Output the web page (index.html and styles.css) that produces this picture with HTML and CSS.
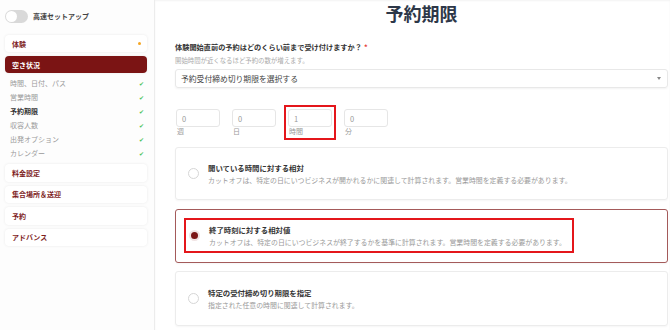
FILE: index.html
```html
<!DOCTYPE html>
<html lang="ja">
<head>
    <meta charset="UTF-8">
    <meta name="viewport" content="width=device-width, initial-scale=1.0">
    <title>予約期限</title>
    <link rel="stylesheet" href="styles.css">
</head>
<body>
    <div class="sidebar">
        <div class="quick-setup">
            <span class="toggle"><span class="knob"></span></span>
            <span>高速セットアップ</span>
        </div>

        <div class="nav-card experience">体験<span class="dot"></span></div>
        <div class="nav-card active">空き状況</div>

        <ul class="sub-list">
            <li>時間、日付、パス<span class="check">✔</span></li>
            <li>営業時間<span class="check">✔</span></li>
            <li class="current">予約期限<span class="check">✔</span></li>
            <li>収容人数<span class="check">✔</span></li>
            <li>出発オプション<span class="check">✔</span></li>
            <li>カレンダー<span class="check">✔</span></li>
        </ul>

        <div class="nav-group">
            <div class="nav-card">料金設定</div>
            <div class="nav-card">集合場所＆送迎</div>
            <div class="nav-card">予約</div>
            <div class="nav-card">アドバンス</div>
        </div>
    </div>

    <div class="main">
        <h1 class="title">予約期限</h1>

        <div class="question">体験開始直前の予約はどのくらい前まで受け付けますか？<span class="req">*</span></div>
        <div class="help">開始時間が近くなるほど予約の数が増えます。</div>

        <div class="select">
            <span>予約受付締め切り期限を選択する</span>
            <span class="caret"></span>
        </div>

        <div class="times">
            <div class="time-field">
                <div class="num">0</div>
                <div class="unit">週</div>
            </div>
            <div class="time-field">
                <div class="num">0</div>
                <div class="unit">日</div>
            </div>
            <div class="time-field marked">
                <div class="num">1</div>
                <div class="unit">時間</div>
            </div>
            <div class="time-field">
                <div class="num">0</div>
                <div class="unit">分</div>
            </div>
        </div>

        <div class="option first">
            <span class="radio"></span>
            <div>
                <div class="opt-title">開いている時間に対する相対</div>
                <div class="opt-desc">カットオフは、特定の日にいつビジネスが開かれるかに関連して計算されます。営業時間を定義する必要があります。</div>
            </div>
        </div>

        <div class="option selected">
            <div class="marked-row">
                <span class="radio on"></span>
                <div>
                    <div class="opt-title">終了時刻に対する相対値</div>
                    <div class="opt-desc">カットオフは、特定の日にいつビジネスが終了するかを基準に計算されます。営業時間を定義する必要があります。</div>
                </div>
            </div>
        </div>

        <div class="option last">
            <span class="radio"></span>
            <div>
                <div class="opt-title">特定の受付締め切り期限を指定</div>
                <div class="opt-desc">指定された任意の時間に関連して計算されます。</div>
            </div>
        </div>
    </div>
</body>
</html>
```

FILE: styles.css
```css
body {
    margin: 0;
    height: 330px;
    overflow: hidden;
    display: flex;
    background-color: #fff;
    font-family: "Noto Sans CJK JP", "Noto Sans", sans-serif;
    color: #333;
}

/* sidebar */

.sidebar {
    width: 142px;
    padding: 9px 7px 0 5px;
    border-right: 1px solid #ececec;
    background-color: #fdfdfd;
    flex-shrink: 0;
}

.quick-setup {
    display: flex;
    align-items: center;
    gap: 5px;
    height: 14px;
    font-size: 7px;
    font-weight: bold;
    color: #444;
}

.toggle {
    width: 23px;
    height: 13px;
    border-radius: 7px;
    background-color: #d9d9d9;
    display: flex;
    align-items: center;
    padding-left: 1px;
    box-sizing: border-box;
}

.knob {
    width: 11px;
    height: 11px;
    border-radius: 50%;
    background-color: #fff;
}

.nav-card {
    height: 17px;
    display: flex;
    align-items: center;
    justify-content: space-between;
    padding: 0 6px 0 7px;
    border-radius: 4px;
    background-color: #fff;
    box-shadow: 0 0 3px rgba(0, 0, 0, 0.08);
    font-size: 7px;
    font-weight: bold;
    color: #7e1d1d;
}

.nav-card.experience {
    margin-top: 12px;
}

.nav-card.active {
    margin-top: 4px;
    background-color: #7b1414;
    color: #fff;
}

.dot {
    width: 3px;
    height: 3px;
    border-radius: 50%;
    background-color: #f5a623;
}

.sub-list {
    list-style: none;
    margin: 3px 0 0;
    padding: 0 0 0 5px;
}

.sub-list li {
    height: 14px;
    display: flex;
    align-items: center;
    justify-content: space-between;
    padding-right: 3px;
    font-size: 7px;
    color: #9a9a9a;
}

.sub-list li.current {
    color: #333;
    font-weight: bold;
}

.check {
    color: #4cc35a;
    font-size: 6px;
    font-weight: normal;
}

.nav-group {
    margin-top: 4px;
    display: flex;
    flex-direction: column;
    gap: 4px;
}

.nav-group .nav-card {
    height: 17.5px;
}

/* main */

.main {
    flex: 1;
    padding: 0 2px 0 20px;
    box-shadow: inset 0 1px 2px rgba(0, 0, 0, 0.05);
}

.title {
    margin: 2px 0 0;
    text-align: center;
    font-size: 18px;
    line-height: 22px;
    color: #2d3748;
}

.question {
    margin-top: 18px;
    font-size: 7.2px;
    line-height: 10px;
    font-weight: bold;
    color: #333;
}

.req {
    color: #e53935;
    margin-left: 2px;
}

.help {
    margin-top: 4px;
    font-size: 6.4px;
    line-height: 9px;
    color: #aaa;
}

.select {
    margin-top: 4px;
    height: 19px;
    box-sizing: border-box;
    display: flex;
    align-items: center;
    justify-content: space-between;
    padding: 0 6px 0 5px;
    border: 1px solid #e8e8e8;
    border-radius: 3px;
    box-shadow: 0 1px 2px rgba(0, 0, 0, 0.05);
    font-size: 7.8px;
    color: #444;
}

.caret {
    width: 0;
    height: 0;
    border-left: 2.5px solid transparent;
    border-right: 2.5px solid transparent;
    border-top: 3px solid #888;
}

.times {
    margin-top: 21px;
    display: flex;
    gap: 12px;
    padding-left: 1px;
}

.time-field {
    width: 44px;
}

.num {
    height: 18px;
    box-sizing: border-box;
    border: 1px solid #e6e6e6;
    border-radius: 3px;
    padding-left: 5px;
    display: flex;
    align-items: center;
    font-size: 7.5px;
    color: #999;
}

.unit {
    font-size: 7px;
    line-height: 9px;
    color: #999;
    padding-left: 1px;
}

.time-field.marked {
    outline: 2px solid #e4161b;
    outline-offset: 2px;
}

.option {
    box-sizing: border-box;
    display: flex;
    align-items: center;
    gap: 9px;
    padding-left: 12px;
    border: 1px solid #ececec;
    border-radius: 3px;
    box-shadow: 0 1px 2px rgba(0, 0, 0, 0.04);
}

.option.first {
    margin-top: 11px;
    height: 53px;
}

.option.selected {
    margin-top: 9px;
    height: 54px;
    padding: 0 0 2px 8px;
    border-color: #a45a5a;
}

.option.last {
    margin-top: 8px;
    height: 55px;
}

.marked-row {
    display: flex;
    align-items: center;
    gap: 9px;
    padding: 4px 6px 4px 3px;
    border: 2px solid #e4161b;
}

.radio {
    width: 11px;
    height: 11px;
    box-sizing: border-box;
    border: 1px solid #d6d6d6;
    border-radius: 50%;
    background-color: #fff;
    flex-shrink: 0;
}

.radio.on {
    border: 2px solid #f1e4e4;
    background-color: #7b1414;
}

.opt-title {
    font-size: 7.4px;
    line-height: 11px;
    font-weight: bold;
    color: #333;
}

.opt-desc {
    margin-top: 2px;
    font-size: 6.9px;
    line-height: 10px;
    color: #999;
}
```
